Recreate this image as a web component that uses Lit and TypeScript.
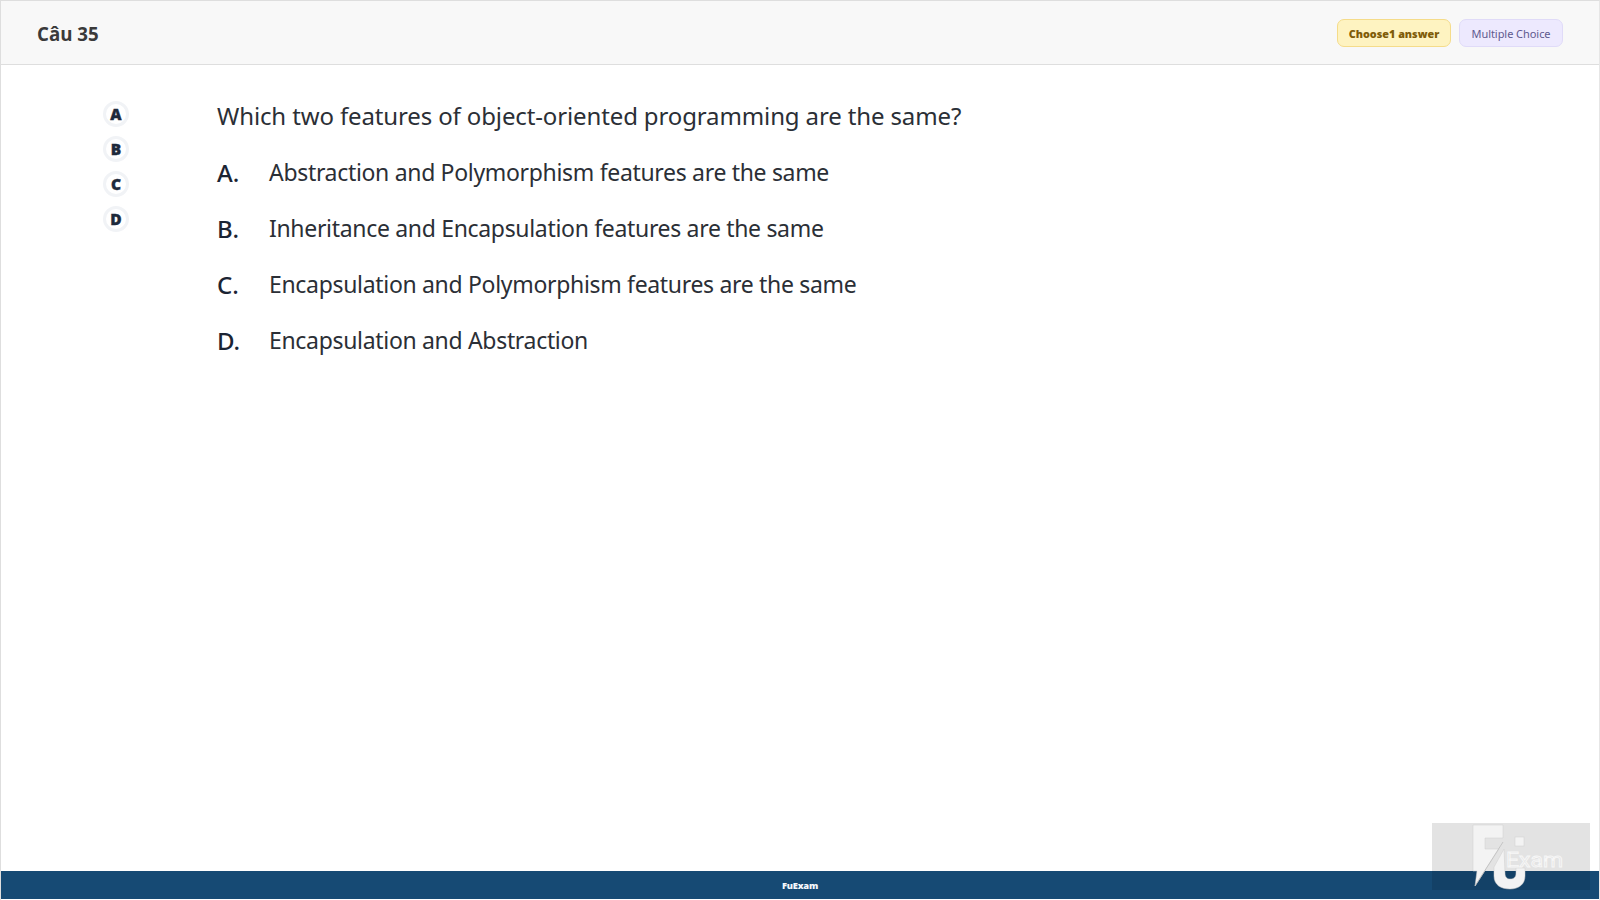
import { LitElement, html, css } from "lit";
import { customElement } from "lit/decorators.js";

@customElement("app-root")
export class AppRoot extends LitElement {
  static styles = css`
    :host { display: block; width: 1600px; height: 900px; font-family: "Noto Sans", "Open Sans", sans-serif; background: #fff; position: relative; overflow: hidden; }
    .page { height: 900px; display: flex; flex-direction: column; box-sizing: border-box; border: 1px solid #dedede; border-bottom: 0; border-right: 1px solid #e6e6e6; }
    .head { height: 64px; flex: none; box-sizing: border-box; background: #f8f8f8; border-bottom: 1px solid #dedede; display: flex; align-items: center; justify-content: space-between; padding: 0 36px; }
    .title { font-size: 18.7px; font-weight: 700; color: #3a3a3a; font-family: "Open Sans", sans-serif; padding-top: 1px; }
    .tags { display: flex; gap: 8px; }
    .tag { height: 28px; box-sizing: border-box; border-radius: 7px; display: flex; align-items: center; justify-content: center; padding-top: 1px; }
    .yellow { width: 114px; background: #fef3c1; border: 1px solid #f5dc8a; color: #7f5c08; font-weight: 900; font-size: 10.8px; padding-top: 2px; }
    .purple { width: 104px; background: #ede9fe; border: 1px solid #e0dbf8; color: #5f5a8f; font-weight: 400; font-size: 11px; letter-spacing: -0.05px; }
    .body { flex: 1; display: flex; padding: 32px 0 0 102px; }
    .side { flex: none; display: flex; flex-direction: column; gap: 9px; padding-top: 3.5px; margin-right: 88px; }
    .dot { width: 26px; height: 26px; box-sizing: border-box; border-radius: 50%; background: #fff; border: 3px solid #f1f3f6; display: flex; align-items: center; justify-content: center; font-size: 15.5px; font-weight: 900; color: #1e2a3b; -webkit-text-stroke: 0.4px #1e2a3b; }
    .q { font-size: 24px; line-height: 36px; color: #2b2f36; margin: 1px 0 20px; letter-spacing: -0.13px; }
    .opt { display: flex; font-size: 23px; line-height: 36px; color: #2b2f36; margin-bottom: 20px; }
    .opt b { width: 52px; flex: none; font-weight: 500; color: #1b2433; font-size: 24px; padding-top: 1px; margin-bottom: -1px; }
    .opt span { letter-spacing: -0.32px; }
    .foot { height: 28px; margin-bottom: 1px; flex: none; background: #164a74; color: #f4f8fc; display: flex; align-items: center; justify-content: center; font-size: 9.3px; font-weight: 900; letter-spacing: -0.2px; }
    .mark { position: absolute; left: 1432px; top: 823px; width: 158px; height: 67px; background: rgba(0,0,0,0.11); }
    .mark svg { display: block; }
    .logo { fill: #f3f3f3; stroke: #cfcfcf; stroke-width: 0.5; }
    .slash { stroke: #bdbdbd; stroke-width: 0.8; fill: none; }
    .ex { font-family: "Roboto", sans-serif; font-size: 20px; fill: rgba(255,255,255,0.15); stroke: #f7f7f7; stroke-width: 0.8; }
  `;
  render() {
    const opts = [
      ["A.", "Abstraction and Polymorphism features are the same"],
      ["B.", "Inheritance and Encapsulation features are the same"],
      ["C.", "Encapsulation and Polymorphism features are the same"],
      ["D.", "Encapsulation and Abstraction"],
    ];
    return html`<div class="page">
      <div class="head">
        <div class="title">Câu 35</div>
        <div class="tags"><div class="tag yellow">Choose1 answer</div><div class="tag purple">Multiple Choice</div></div>
      </div>
      <div class="body">
        <div class="side">${["A","B","C","D"].map(l => html`<div class="dot">${l}</div>`)}</div>
        <div>
          <div class="q">Which two features of object-oriented programming are the same?</div>
          ${opts.map(([a,b]) => html`<div class="opt"><b>${a}</b><span>${b}</span></div>`)}
        </div>
      </div>
      <div class="foot">FuExam</div>
    </div>
    <div class="mark"><svg width="158" height="67" viewBox="0 0 158 67">
      <path class="logo" d="M41 2H71V15H53V26H67L45 60L43 63L45 48H41Z"/>
      <path class="slash" d="M71 19L43 63"/>
      <path class="logo" d="M72 26L62 44V53C62 62 69 66 78 66C87 66 93 61 93 53V45H84V50C84 54 82 56 78 56C75 56 73 54 73 50Z"/>
      <rect class="logo" x="83" y="14" width="9" height="9"/>
      <text class="ex" x="74" y="44" textLength="57" lengthAdjust="spacingAndGlyphs">Exam</text>
    </svg></div>`;
  }
}
